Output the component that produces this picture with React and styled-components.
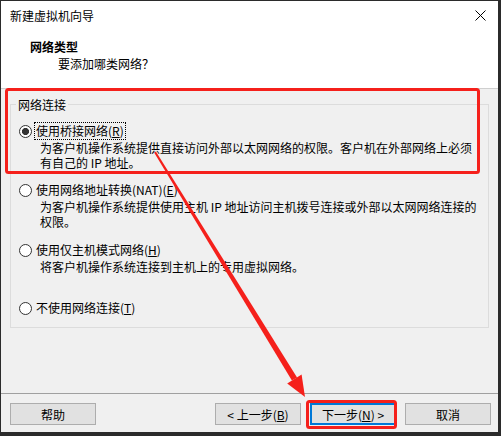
import React from 'react';
import styled, { createGlobalStyle } from 'styled-components';

const GlobalStyle = createGlobalStyle`
  html, body {
    margin: 0;
    padding: 0;
    background: #2b2b2b;
  }
  body {
    font-family: "Microsoft YaHei", "Noto Sans CJK SC", sans-serif;
    font-size: 12px;
    color: #000;
  }
`;

const Page = styled.div`
  position: relative;
  width: 501px;
  height: 436px;
`;

const Window = styled.div`
  width: 501px;
  height: 436px;
  box-sizing: border-box;
  border-style: solid;
  border-color: #2b2b2b;
  border-width: 1px 3px 4px 1px;
  background: #f0f0f0;
  display: flex;
  flex-direction: column;
`;

const TitleBar = styled.div`
  height: 29px;
  background: #fff;
  display: flex;
  align-items: center;
  justify-content: space-between;
  padding: 0 12px 0 9px;
  line-height: 17px;
`;

const Header = styled.div`
  height: 59px;
  box-sizing: border-box;
  background: #fff;
  border-bottom: 1px solid #cfcfcf;
  padding: 8px 0 0 29px;
`;

const HeaderTitle = styled.div`
  font-weight: bold;
  line-height: 17px;
`;

const HeaderSub = styled.div`
  padding-left: 28px;
  line-height: 17px;
`;

const Body = styled.div`
  flex: 1;
  padding: 7px 9px 0 9px;
`;

const Group = styled.fieldset`
  margin: 0;
  padding: 0 0 10px 8px;
  border: 1px solid #dcdcdc;
  min-width: 0;
`;

const Legend = styled.legend`
  padding: 0 2px;
  margin-left: -3px;
  line-height: 17px;
`;

const Option = styled.div`
  display: flex;
  flex-direction: column;
  margin-top: ${p => p.$gap}px;
`;

const RadioRow = styled.div`
  display: flex;
  align-items: center;
  height: 18px;
`;

const Radio = styled.span`
  width: 13px;
  height: 13px;
  box-sizing: border-box;
  border-radius: 50%;
  border: 1px solid #333;
  margin-right: 3px;
  background: ${p => (p.$checked
    ? 'radial-gradient(circle, #333 0 3.3px, #fff 3.8px)'
    : '#fff')};
`;

const Label = styled.span`
  line-height: 16px;
  padding: 0 1px;
  outline: ${p => (p.$focus ? '1px dotted #000' : 'none')};
`;

const Desc = styled.div`
  padding-left: 21px;
  line-height: 15px;
`;

const Footer = styled.div`
  height: 39px;
  box-sizing: border-box;
  border-top: 1px solid #a0a0a0;
  padding: 9px 7px 0 9px;
  display: flex;
  align-items: flex-start;
`;

const Spacer = styled.div`
  flex: 1;
`;

const Button = styled.button`
  width: 86px;
  height: 22px;
  box-sizing: border-box;
  padding: 0;
  margin-left: ${p => p.$gap || 0}px;
  font-family: inherit;
  font-size: 12px;
  color: #000;
  background: #e1e1e1;
  border: 1px solid ${p => (p.$focus ? '#0078d7' : '#adadad')};
  box-shadow: ${p => (p.$focus ? 'inset 0 0 0 1px #0078d7' : 'none')};
`;

const Overlay = styled.svg`
  position: absolute;
  left: 0;
  top: 0;
  pointer-events: none;
`;

const CloseIcon = () => (
  <svg width="11" height="11" viewBox="0 0 11 11">
    <path d="M0.5 0.5 L10.5 10.5 M10.5 0.5 L0.5 10.5" stroke="#000" strokeWidth="1" fill="none" />
  </svg>
);

const options = [
  {
    gap: 9,
    checked: true,
    label: <>使用桥接网络(<u>R</u>)</>,
    desc: ['为客户机操作系统提供直接访问外部以太网网络的权限。客户机在外部网络上必须', '有自己的 IP 地址。'],
  },
  {
    gap: 11,
    label: <>使用网络地址转换(NAT)(<u>E</u>)</>,
    desc: ['为客户机操作系统提供使用主机 IP 地址访问主机拨号连接或外部以太网网络连接的', '权限。'],
  },
  {
    gap: 12,
    label: <>使用仅主机模式网络(<u>H</u>)</>,
    desc: ['将客户机操作系统连接到主机上的专用虚拟网络。'],
  },
  {
    gap: 25,
    label: <>不使用网络连接(<u>T</u>)</>,
    desc: [],
  },
];

const RED = '#f5201b';

export default function App() {
  return (
    <Page>
      <GlobalStyle />
      <Window>
        <TitleBar>
          <span>新建虚拟机向导</span>
          <CloseIcon />
        </TitleBar>
        <Header>
          <HeaderTitle>网络类型</HeaderTitle>
          <HeaderSub>要添加哪类网络？</HeaderSub>
        </Header>
        <Body>
          <Group>
            <Legend>网络连接</Legend>
            {options.map((o, i) => (
              <Option key={i} $gap={o.gap}>
                <RadioRow>
                  <Radio $checked={o.checked} />
                  <Label $focus={o.checked}>{o.label}</Label>
                </RadioRow>
                {o.desc.map(line => (
                  <Desc key={line}>{line}</Desc>
                ))}
              </Option>
            ))}
          </Group>
        </Body>
        <Footer>
          <Button>帮助</Button>
          <Spacer />
          <Button>&lt; 上一步(<u>B</u>)</Button>
          <Button $gap={9} $focus>下一步(<u>N</u>) &gt;</Button>
          <Button $gap={9}>取消</Button>
        </Footer>
      </Window>
      <Overlay width="501" height="436" viewBox="0 0 501 436">
        <rect x="6.5" y="89.5" width="472" height="83" rx="2" fill="none" stroke={RED} strokeWidth="3" />
        <rect x="307.5" y="401.5" width="88" height="26" rx="2" fill="none" stroke={RED} strokeWidth="3" />
        <polygon
          points="155.9,151.5 154.1,152.5 291.9,380.6 297.1,377.4"
          fill={RED}
        />
        <polygon points="305,397 287.2,383.6 301.6,374.4" fill={RED} />
      </Overlay>
    </Page>
  );
}
